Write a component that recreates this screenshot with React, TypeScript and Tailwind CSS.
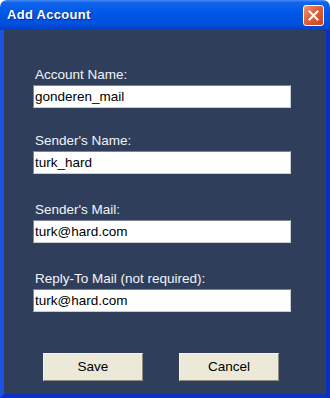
import React from 'react';

const fields = [
  { label: 'Account Name:', value: 'gonderen_mail', gap: 'mt-[37px]' },
  { label: "Sender's Name:", value: 'turk_hard', gap: 'mt-[25px]' },
  { label: "Sender's Mail:", value: 'turk@hard.com', gap: 'mt-[28px]' },
  { label: 'Reply-To Mail (not required):', value: 'turk@hard.com', gap: 'mt-[28px]' },
];

export default function App() {
  return (
    <div className="w-[330px] h-[398px] bg-white flex flex-col font-['Liberation_Sans',Arial,sans-serif]">
      {/* Title bar */}
      <div className="h-[30px] shrink-0 rounded-t-[7px] flex items-center justify-between pl-[7px] pr-[6px] bg-[linear-gradient(to_bottom,#4a8cf6_0%,#1266ec_8%,#0058e6_40%,#0050dc_80%,#0040c6_100%)]">
        <span className="text-white font-bold text-[13px] tracking-[0.3px] [text-shadow:1px_1px_0_#0a2a8a]">
          Add Account
        </span>
        <button
          type="button"
          className="w-[21px] h-[21px] rounded-[3px] border border-white flex items-center justify-center bg-[linear-gradient(135deg,#ee9572_0%,#e0603a_45%,#c9441c_100%)]"
          aria-label="Close"
        >
          <svg width="11" height="11" viewBox="0 0 11 11">
            <path d="M1.5 1.5 L9.5 9.5 M9.5 1.5 L1.5 9.5" stroke="#fff" strokeWidth="2" strokeLinecap="square" />
          </svg>
        </button>
      </div>

      {/* Body */}
      <div className="flex-1 flex flex-col bg-[#2f3f5b] border-l-4 border-r-4 border-b-4 border-l-[#1c52e0] border-r-[#0a2fc2] border-b-[#0a30c4] pl-[29px]">
        {fields.map((f) => (
          <div key={f.label} className={`${f.gap} flex flex-col`}>
            <label className="ml-[2px] text-[13.5px] leading-[15px] text-[#f2f4f8]">{f.label}</label>
            <div className="mt-[3px] w-[258px] h-[23px] bg-white border border-[#c9ced6] border-t-[#7d8594] border-l-[#7d8594] flex items-center pl-[1px]">
              <span className="text-[13.5px] leading-[15px] text-black">{f.value}</span>
            </div>
          </div>
        ))}

        <div className="mt-[41px] flex gap-[36px] pl-[10px]">
          <button
            type="button"
            className="w-[100px] h-[28px] bg-[#ece9d8] border border-[#f6f4ec] border-r-[#8e8c80] border-b-[#8e8c80] text-[13.5px] text-black"
          >
            Save
          </button>
          <button
            type="button"
            className="w-[100px] h-[28px] bg-[#ece9d8] border border-[#f6f4ec] border-r-[#8e8c80] border-b-[#8e8c80] text-[13.5px] text-black"
          >
            Cancel
          </button>
        </div>
      </div>
    </div>
  );
}
